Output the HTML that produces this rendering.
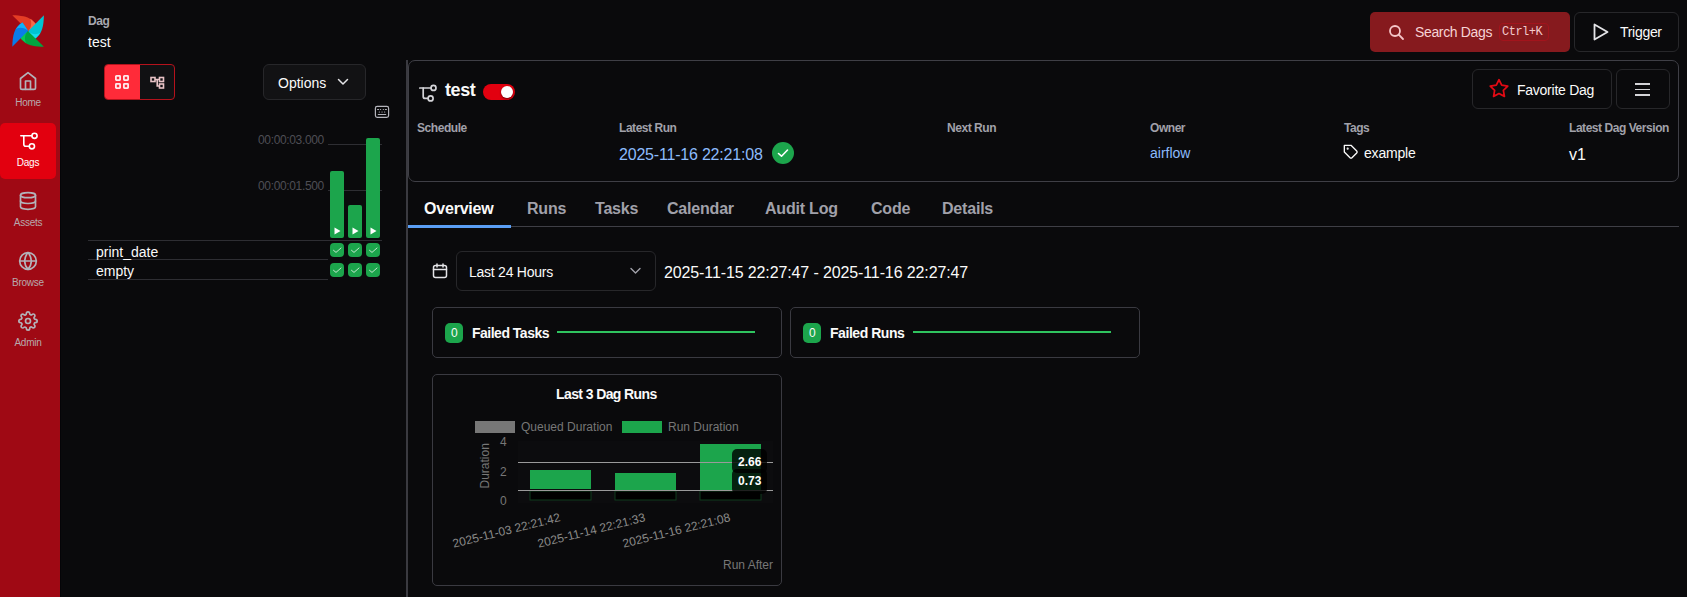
<!DOCTYPE html>
<html><head><meta charset="utf-8">
<style>
*{box-sizing:border-box;margin:0;padding:0}
html,body{width:1687px;height:597px;overflow:hidden;background:#0a0a0c;font-family:"Liberation Sans",sans-serif;color:#fafafa}
.abs{position:absolute}
.t{position:absolute;white-space:nowrap;line-height:1}
#side{position:absolute;left:0;top:0;width:61px;height:597px;background:#9f0914;border-right:1px solid #050508}
.nav{position:absolute;left:0;width:56px;height:56px;color:#b7a9ad;font-size:10px}
.nav svg{position:absolute;left:18px;top:8px}
.nav span{position:absolute;left:0;width:56px;text-align:center;top:35px;line-height:1;letter-spacing:-0.25px}
.nav.act{background:#e2000f;border-radius:5px;color:#fff}
.lbl{position:absolute;white-space:nowrap;line-height:1;font-size:12px;color:#a1a1aa;font-weight:bold;letter-spacing:-0.45px}
.tab{position:absolute;top:201px;font-size:16px;font-weight:bold;color:#a1a1aa;line-height:1;white-space:nowrap;letter-spacing:-0.2px}
.box{position:absolute;border:1px solid #27272a;border-radius:6px}
.card{position:absolute;border:1px solid #3a3a41;border-radius:5px}
.chk{position:absolute;width:14px;height:14px;background:#1ca54c;border-radius:4px}
.chk svg{position:absolute;left:2px;top:2px}
.bar{position:absolute;width:14px;background:#1ca54c;border-radius:2px}
.bar svg{position:absolute;left:4px;bottom:3px}
</style></head><body>
<div id="side">
  <svg class="abs" style="left:12px;top:15px" width="32" height="32" viewBox="0 0 32 32"><g transform="rotate(0 16.1 16)"><path d="M0.3 0.2 C9 0.4 15 1.5 19 4.3 C22 6.5 23.8 8.6 24.6 10.4 L16.3 16 Z" fill="#e43d25"/><path d="M18.2 3.8 C21.5 6.2 23.6 8.4 24.6 10.4 L16.3 16 C19.5 12.5 20 8 18.2 3.8 Z" fill="#f56a4b"/></g><g transform="rotate(90 16.1 16)"><path d="M0.3 0.2 C9 0.4 15 1.5 19 4.3 C22 6.5 23.8 8.6 24.6 10.4 L16.3 16 Z" fill="#00c4d2"/><path d="M18.2 3.8 C21.5 6.2 23.6 8.4 24.6 10.4 L16.3 16 C19.5 12.5 20 8 18.2 3.8 Z" fill="#18dcea"/></g><g transform="rotate(180 16.1 16)"><path d="M0.3 0.2 C9 0.4 15 1.5 19 4.3 C22 6.5 23.8 8.6 24.6 10.4 L16.3 16 Z" fill="#00a640"/><path d="M18.2 3.8 C21.5 6.2 23.6 8.4 24.6 10.4 L16.3 16 C19.5 12.5 20 8 18.2 3.8 Z" fill="#05c956"/></g><g transform="rotate(270 16.1 16)"><path d="M0.3 0.2 C9 0.4 15 1.5 19 4.3 C22 6.5 23.8 8.6 24.6 10.4 L16.3 16 Z" fill="#0b7ce8"/><path d="M18.2 3.8 C21.5 6.2 23.6 8.4 24.6 10.4 L16.3 16 C19.5 12.5 20 8 18.2 3.8 Z" fill="#12b3f9"/></g></svg>
  <div class="nav" style="top:63px">
    <svg width="20" height="20" viewBox="0 0 24 24" fill="none" stroke="#b3b3ba" stroke-width="2" stroke-linecap="round" stroke-linejoin="round"><path d="M3 9l9-7 9 7v11a2 2 0 0 1-2 2H5a2 2 0 0 1-2-2z"/><polyline points="9 22 9 12 15 12 15 22"/></svg>
    <span>Home</span></div>
  <div class="nav act" style="top:123px">
    <svg style="left:0;top:0" width="56" height="56" viewBox="0 0 56 56" fill="none" stroke="#fff" stroke-width="1.6" stroke-linecap="round" stroke-linejoin="round"><path d="M20.8 12.8H31.8"/><circle cx="34.5" cy="12.8" r="2.6"/><path d="M23.8 12.8V21.3a2 2 0 0 0 2 2H29.3"/><circle cx="31.9" cy="23.3" r="2.6"/></svg>
    <span>Dags</span></div>
  <div class="nav" style="top:183px">
    <svg width="20" height="20" viewBox="0 0 24 24" fill="none" stroke="#b3b3ba" stroke-width="2" stroke-linecap="round" stroke-linejoin="round"><ellipse cx="12" cy="5" rx="9" ry="3"/><path d="M21 12c0 1.66-4 3-9 3s-9-1.34-9-3"/><path d="M3 5v14c0 1.66 4 3 9 3s9-1.34 9-3V5"/></svg>
    <span>Assets</span></div>
  <div class="nav" style="top:243px">
    <svg width="20" height="20" viewBox="0 0 24 24" fill="none" stroke="#b3b3ba" stroke-width="2" stroke-linecap="round" stroke-linejoin="round"><circle cx="12" cy="12" r="10"/><line x1="2" y1="12" x2="22" y2="12"/><path d="M12 2a15.3 15.3 0 0 1 4 10 15.3 15.3 0 0 1-4 10 15.3 15.3 0 0 1-4-10 15.3 15.3 0 0 1 4-10z"/></svg>
    <span>Browse</span></div>
  <div class="nav" style="top:303px">
    <svg width="20" height="20" viewBox="0 0 24 24" fill="none" stroke="#b3b3ba" stroke-width="2" stroke-linecap="round" stroke-linejoin="round"><circle cx="12" cy="12" r="3"/><path d="M19.4 15a1.65 1.65 0 0 0 .33 1.820l.06.06a2 2 0 0 1 0 2.83 2 2 0 0 1-2.83 0l-.06-.06a1.65 1.65 0 0 0-1.82-.33 1.65 1.65 0 0 0-1 1.51V21a2 2 0 0 1-2 2 2 2 0 0 1-2-2v-.09A1.65 1.65 0 0 0 9 19.4a1.65 1.65 0 0 0-1.82.33l-.06.06a2 2 0 0 1-2.83 0 2 2 0 0 1 0-2.83l.06-.06a1.65 1.65 0 0 0 .33-1.82 1.65 1.65 0 0 0-1.51-1H3a2 2 0 0 1-2-2 2 2 0 0 1 2-2h.09A1.65 1.65 0 0 0 4.6 9a1.65 1.65 0 0 0-.33-1.82l-.06-.06a2 2 0 0 1 0-2.830 2 2 0 0 1 2.83 0l.06.06a1.65 1.65 0 0 0 1.82.33H9a1.65 1.65 0 0 0 1-1.51V3a2 2 0 0 1 2-2 2 2 0 0 1 2 2v.09a1.65 1.65 0 0 0 1 1.51 1.65 1.65 0 0 0 1.82-.33l.06-.06a2 2 0 0 1 2.83 0 2 2 0 0 1 0 2.83l-.06.06a1.65 1.65 0 0 0-.33 1.82V9a1.65 1.65 0 0 0 1.51 1H21a2 2 0 0 1 2 2 2 2 0 0 1-2 2h-.09a1.65 1.65 0 0 0-1.51 1z"/></svg>
    <span>Admin</span></div>
</div>

<!-- top left title -->
<div class="lbl" style="left:88px;top:15px;color:#a8a8b0">Dag</div>
<div class="t" style="left:88px;top:35px;font-size:14px;color:#fafafa">test</div>

<!-- view toggle -->
<div class="abs" style="left:104px;top:64px;width:71px;height:36px;border:1px solid #b5121c;border-radius:4px;background:#111113;overflow:hidden">
  <div class="abs" style="left:0;top:0;width:35px;height:34px;background:#ff2b39"></div>
  <svg class="abs" style="left:10px;top:10px" width="14" height="14" viewBox="0 0 14 14" fill="none" stroke="#ffe8ea" stroke-width="1.8"><rect x="0.9" y="0.9" width="4.2" height="4.2" rx="0.5"/><rect x="8.9" y="0.9" width="4.2" height="4.2" rx="0.5"/><rect x="0.9" y="8.9" width="4.2" height="4.2" rx="0.5"/><rect x="8.9" y="8.9" width="4.2" height="4.2" rx="0.5"/></svg>
  <svg class="abs" style="left:45px;top:11px" width="15" height="13" viewBox="0 0 15 13" fill="none" stroke="#e9c3c6" stroke-width="1.6"><rect x="1" y="1.5" width="4" height="4"/><rect x="9.5" y="1.5" width="4" height="4"/><rect x="9.5" y="8" width="4" height="4"/><path d="M5 3.5H9.5M7.2 3.5V10H9.5"/></svg>
</div>

<!-- options -->
<div class="box" style="left:263px;top:64px;width:103px;height:36px;background:#121214"></div>
<div class="t" style="left:278px;top:76px;font-size:14px;color:#fafafa">Options</div>
<svg class="abs" style="left:337px;top:77px" width="12" height="10" viewBox="0 0 12 10" fill="none" stroke="#e4e4e7" stroke-width="1.5" stroke-linecap="round" stroke-linejoin="round"><path d="M1.5 2.5L6 7L10.5 2.5"/></svg>

<!-- keyboard icon -->
<svg class="abs" style="left:374px;top:105px" width="16" height="14" viewBox="0 0 16 14" fill="none" stroke="#b4b4bb" stroke-width="1.2" stroke-linecap="round"><rect x="1.4" y="1.4" width="13.2" height="11" rx="1.8"/><path d="M3.6 4.5h1M6.5 4.5h0.1M9.3 4.5h0.1M11.4 4.5h1M5.3 7h0.1M8 7h0.1M10.6 7h0.1M4.3 9.5h7.4"/></svg>

<!-- grid duration chart -->
<div class="t" style="left:258px;top:134px;font-size:12px;color:#4e4e55;letter-spacing:-0.35px">00:00:03.000</div>
<div class="t" style="left:258px;top:180px;font-size:12px;color:#4e4e55;letter-spacing:-0.35px">00:00:01.500</div>
<div class="abs" style="left:328px;top:144px;width:54px;height:1px;background:#2e2e33"></div>
<div class="abs" style="left:328px;top:190px;width:54px;height:1px;background:#2e2e33"></div>
<div class="bar" style="left:330px;top:171px;height:67px"><svg width="7" height="8" viewBox="0 0 7 8"><path d="M0.5 0.5L6.5 4L0.5 7.5Z" fill="#fff"/></svg></div>
<div class="bar" style="left:348px;top:205px;height:33px"><svg width="7" height="8" viewBox="0 0 7 8"><path d="M0.5 0.5L6.5 4L0.5 7.5Z" fill="#fff"/></svg></div>
<div class="bar" style="left:366px;top:138px;height:100px"><svg width="7" height="8" viewBox="0 0 7 8"><path d="M0.5 0.5L6.5 4L0.5 7.5Z" fill="#fff"/></svg></div>
<div class="abs" style="left:88px;top:240px;width:294px;height:1px;background:#2e2e33"></div>
<div class="abs" style="left:88px;top:259px;width:240px;height:1px;background:#2e2e33"></div>
<div class="abs" style="left:88px;top:279px;width:240px;height:1px;background:#2e2e33"></div>
<div class="t" style="left:96px;top:245px;font-size:14px;color:#fafafa">print_date</div>
<div class="t" style="left:96px;top:264px;font-size:14px;color:#fafafa">empty</div>
<div class="chk" style="left:330px;top:243px"><svg width="10" height="10" viewBox="0 0 10 10" fill="none" stroke="#d6ecdc" stroke-width="0.9" stroke-linecap="round"><path d="M1.5 5.3L4 7.4L9 3"/></svg></div>
<div class="chk" style="left:348px;top:243px"><svg width="10" height="10" viewBox="0 0 10 10" fill="none" stroke="#d6ecdc" stroke-width="0.9" stroke-linecap="round"><path d="M1.5 5.3L4 7.4L9 3"/></svg></div>
<div class="chk" style="left:366px;top:243px"><svg width="10" height="10" viewBox="0 0 10 10" fill="none" stroke="#d6ecdc" stroke-width="0.9" stroke-linecap="round"><path d="M1.5 5.3L4 7.4L9 3"/></svg></div>
<div class="chk" style="left:330px;top:263px"><svg width="10" height="10" viewBox="0 0 10 10" fill="none" stroke="#d6ecdc" stroke-width="0.9" stroke-linecap="round"><path d="M1.5 5.3L4 7.4L9 3"/></svg></div>
<div class="chk" style="left:348px;top:263px"><svg width="10" height="10" viewBox="0 0 10 10" fill="none" stroke="#d6ecdc" stroke-width="0.9" stroke-linecap="round"><path d="M1.5 5.3L4 7.4L9 3"/></svg></div>
<div class="chk" style="left:366px;top:263px"><svg width="10" height="10" viewBox="0 0 10 10" fill="none" stroke="#d6ecdc" stroke-width="0.9" stroke-linecap="round"><path d="M1.5 5.3L4 7.4L9 3"/></svg></div>

<!-- vertical divider -->
<div class="abs" style="left:406px;top:60px;width:2px;height:537px;background:#3a3a40"></div>

<!-- top right buttons -->
<div class="abs" style="left:1370px;top:12px;width:200px;height:40px;background:#861a1e;border-radius:5px"></div>
<svg class="abs" style="left:1388px;top:24px" width="17" height="17" viewBox="0 0 17 17" fill="none" stroke="#f5c6c8" stroke-width="1.8" stroke-linecap="round"><circle cx="7" cy="7" r="5"/><path d="M10.7 10.7L15 15"/></svg>
<div class="t" style="left:1415px;top:25px;font-size:14px;color:#f6d3d5;letter-spacing:-0.35px">Search Dags</div>
<div class="abs" style="left:1499px;top:23px;width:50px;height:18px;border:1px solid #a3141c;border-radius:4px"></div>
<div class="t" style="left:1502px;top:26px;font-family:'Liberation Mono',monospace;font-size:12px;letter-spacing:-0.5px;color:#f2c9cb">Ctrl+K</div>
<div class="box" style="left:1574px;top:12px;width:105px;height:40px"></div>
<svg class="abs" style="left:1592px;top:22px" width="18" height="20" viewBox="0 0 18 20" fill="none" stroke="#e4e4e7" stroke-width="1.8" stroke-linejoin="round"><path d="M2.5 2.5L15.5 10L2.5 17.5Z"/></svg>
<div class="t" style="left:1620px;top:25px;font-size:14px;color:#fafafa;letter-spacing:-0.3px">Trigger</div>

<!-- header card -->
<div class="abs" style="left:408px;top:60px;width:1271px;height:122px;border:1px solid #3f3f46;border-radius:7px"></div>
<svg class="abs" style="left:416px;top:80px" width="24" height="24" viewBox="0 0 24 24" fill="none" stroke="#d4d4d8" stroke-width="1.7" stroke-linecap="round" stroke-linejoin="round"><path d="M3.8 8H15"/><circle cx="17.5" cy="7.9" r="2.5"/><path d="M7.2 8V16.4a2 2 0 0 0 2 2H12.1"/><circle cx="14.6" cy="18.4" r="2.5"/></svg>
<div class="t" style="left:445px;top:81px;font-size:18px;font-weight:bold;color:#fafafa;letter-spacing:-0.4px">test</div>
<div class="abs" style="left:483px;top:84px;width:32px;height:16px;border-radius:8px;background:#e2000f"></div>
<div class="abs" style="left:501px;top:86px;width:12px;height:12px;border-radius:6px;background:#fff;box-shadow:0 1px 2px rgba(0,0,0,.5)"></div>

<div class="box" style="left:1472px;top:69px;width:140px;height:40px"></div>
<svg class="abs" style="left:1488px;top:78px" width="22" height="21" viewBox="0 0 24 24" fill="none" stroke="#e20a14" stroke-width="2" stroke-linejoin="round"><path d="M12 2l3.09 6.26L22 9.27l-5 4.87 1.18 6.88L12 17.77l-6.18 3.25L7 14.14 2 9.27l6.91-1.01L12 2z"/></svg>
<div class="t" style="left:1517px;top:83px;font-size:14px;color:#fafafa;letter-spacing:-0.25px">Favorite Dag</div>
<div class="box" style="left:1616px;top:69px;width:54px;height:40px"></div>
<div class="abs" style="left:1635px;top:83px;width:15px;height:1.6px;background:#d4d4d8"></div>
<div class="abs" style="left:1635px;top:88.5px;width:15px;height:1.6px;background:#d4d4d8"></div>
<div class="abs" style="left:1635px;top:94px;width:15px;height:1.6px;background:#d4d4d8"></div>

<div class="lbl" style="left:417px;top:122px">Schedule</div>
<div class="lbl" style="left:619px;top:122px">Latest Run</div>
<div class="lbl" style="left:947px;top:122px">Next Run</div>
<div class="lbl" style="left:1150px;top:122px">Owner</div>
<div class="lbl" style="left:1344px;top:122px">Tags</div>
<div class="lbl" style="left:1569px;top:122px">Latest Dag Version</div>

<div class="t" style="left:619px;top:147px;font-size:16px;color:#8cbbfc;letter-spacing:-0.2px">2025-11-16 22:21:08</div>
<div class="abs" style="left:772px;top:142px;width:22px;height:22px;border-radius:11px;background:#1ca54c"></div>
<svg class="abs" style="left:776px;top:146px" width="14" height="14" viewBox="0 0 14 14" fill="none" stroke="#fff" stroke-width="1.6" stroke-linecap="round" stroke-linejoin="round"><path d="M2.5 7.5L5.5 10.2L11.5 4"/></svg>
<div class="t" style="left:1150px;top:146px;font-size:14px;color:#8cbbfc">airflow</div>
<svg class="abs" style="left:1343px;top:144px" width="16" height="16" viewBox="0 0 24 24" fill="none" stroke="#fafafa" stroke-width="2" stroke-linecap="round" stroke-linejoin="round"><path d="M20.59 13.41l-7.17 7.17a2 2 0 0 1-2.83 0L2 12V2h10l8.59 8.59a2 2 0 0 1 0 2.82z"/><circle cx="7" cy="7" r="0.6" fill="#fafafa"/></svg>
<div class="t" style="left:1364px;top:146px;font-size:14px;color:#fafafa;letter-spacing:-0.2px">example</div>
<div class="t" style="left:1569px;top:147px;font-size:16px;color:#fafafa">v1</div>

<!-- tabs -->
<div class="abs" style="left:408px;top:226px;width:1271px;height:1px;background:#3f3f46"></div>
<div class="abs" style="left:408px;top:225px;width:103px;height:3px;background:#5a9ef5"></div>
<div class="tab" style="left:424px;color:#fafafa">Overview</div>
<div class="tab" style="left:527px">Runs</div>
<div class="tab" style="left:595px">Tasks</div>
<div class="tab" style="left:667px">Calendar</div>
<div class="tab" style="left:765px">Audit Log</div>
<div class="tab" style="left:871px">Code</div>
<div class="tab" style="left:942px">Details</div>

<!-- date row -->
<svg class="abs" style="left:432px;top:263px" width="16" height="16" viewBox="0 0 16 16" fill="none" stroke="#e4e4e7" stroke-width="1.5" stroke-linecap="round"><rect x="1.5" y="2.5" width="13" height="12" rx="2"/><path d="M1.5 6.5h13M5 1v3M11 1v3"/></svg>
<div class="box" style="left:456px;top:251px;width:200px;height:40px"></div>
<div class="t" style="left:469px;top:265px;font-size:14px;color:#fafafa;letter-spacing:-0.25px">Last 24 Hours</div>
<svg class="abs" style="left:629px;top:266px" width="13" height="10" viewBox="0 0 13 10" fill="none" stroke="#a1a1aa" stroke-width="1.4" stroke-linecap="round" stroke-linejoin="round"><path d="M2 2.5L6.5 7L11 2.5"/></svg>
<div class="t" style="left:664px;top:265px;font-size:16px;color:#fafafa;letter-spacing:-0.12px">2025-11-15 22:27:47 - 2025-11-16 22:27:47</div>

<!-- failed cards -->
<div class="card" style="left:432px;top:307px;width:350px;height:51px"></div>
<div class="abs" style="left:445px;top:323px;width:18px;height:20px;border-radius:5px;background:#1ca54c"></div>
<div class="t" style="left:451px;top:327px;font-size:12px;color:#fafafa">0</div>
<div class="t" style="left:472px;top:326px;font-size:14px;font-weight:bold;color:#fafafa;letter-spacing:-0.5px">Failed Tasks</div>
<div class="abs" style="left:557px;top:331px;width:198px;height:2px;background:#2fc45f"></div>

<div class="card" style="left:790px;top:307px;width:350px;height:51px"></div>
<div class="abs" style="left:803px;top:323px;width:18px;height:20px;border-radius:5px;background:#1ca54c"></div>
<div class="t" style="left:809px;top:327px;font-size:12px;color:#fafafa">0</div>
<div class="t" style="left:830px;top:326px;font-size:14px;font-weight:bold;color:#fafafa;letter-spacing:-0.45px">Failed Runs</div>
<div class="abs" style="left:913px;top:331px;width:198px;height:2px;background:#2fc45f"></div>

<!-- last 3 dag runs card -->
<div class="card" style="left:432px;top:374px;width:350px;height:212px"></div>
<div class="t" style="left:556px;top:387px;font-size:14px;font-weight:bold;color:#fafafa;letter-spacing:-0.6px">Last 3 Dag Runs</div>
<svg class="abs" style="left:432px;top:374px" width="350" height="212" viewBox="432 374 350 212" font-family="Liberation Sans" font-size="12">
  <rect x="475" y="421" width="40" height="12" fill="#777"/>
  <text x="521" y="430.5" fill="#777">Queued Duration</text>
  <rect x="622" y="421" width="40" height="12" fill="#1ca54c"/>
  <text x="668" y="430.5" fill="#777">Run Duration</text>
  <rect x="518" y="441" width="255" height="62" fill="#0c0c0e"/>
  <text x="500" y="446" fill="#777">4</text>
  <text x="500" y="476" fill="#777">2</text>
  <text x="500" y="505" fill="#777">0</text>
  <text transform="translate(489,488.5) rotate(-90)" fill="#777">Duration</text>
  <rect x="530" y="491" width="61" height="9" fill="#000" stroke="#0f3a1c" stroke-width="1"/>
  <rect x="615" y="491" width="61" height="9" fill="#000" stroke="#0f3a1c" stroke-width="1"/>
  <rect x="700" y="491" width="61" height="9" fill="#000" stroke="#0f3a1c" stroke-width="1"/>
  <rect x="530" y="470" width="61" height="19" fill="#1ca54c"/>
  <rect x="615" y="473" width="61" height="17" fill="#1ca54c"/>
  <rect x="700" y="444" width="61" height="47" fill="#1ca54c"/>
  <line x1="518" y1="462.5" x2="773" y2="462.5" stroke="#9a9a9a" stroke-width="1.1"/>
  <line x1="518" y1="490.5" x2="773" y2="490.5" stroke="#9a9a9a" stroke-width="1.1"/>
  <rect x="732" y="449" width="35" height="24" rx="5" fill="#000" fill-opacity="0.8"/>
  <rect x="732" y="469" width="35" height="25" rx="5" fill="#000" fill-opacity="0.8"/>
  <text x="738" y="466" fill="#fff" font-weight="bold">2.66</text>
  <text x="738" y="485" fill="#fff" font-weight="bold">0.73</text>
  <text transform="translate(561,521) rotate(-14)" text-anchor="end" fill="#8a8a8a">2025-11-03 22:21:42</text>
  <text transform="translate(646,521) rotate(-14)" text-anchor="end" fill="#8a8a8a">2025-11-14 22:21:33</text>
  <text transform="translate(731,521) rotate(-14)" text-anchor="end" fill="#8a8a8a">2025-11-16 22:21:08</text>
  <text x="773" y="569" text-anchor="end" fill="#777">Run After</text>
</svg>
</body></html>
